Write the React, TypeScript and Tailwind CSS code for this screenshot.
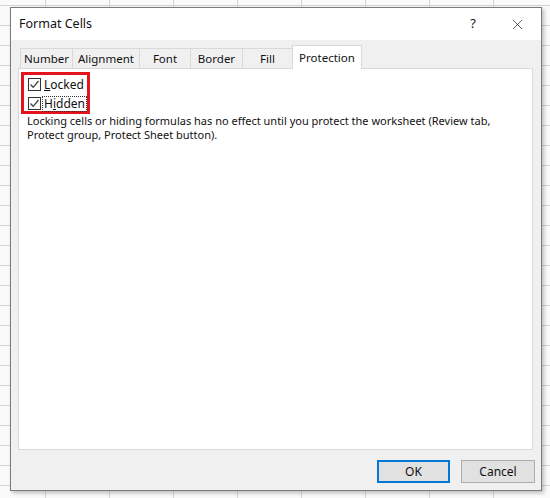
import { X } from "lucide-react";

const tabs = [
  { label: "Number", w: "w-[52px]" },
  { label: "Alignment", w: "w-[67px]" },
  { label: "Font", w: "w-[51px]" },
  { label: "Border", w: "w-[52px]" },
  { label: "Fill", w: "w-[50px]" },
];

function Check() {
  return (
    <span className="w-[13px] h-[13px] border border-[#333] bg-white flex items-center justify-center shrink-0">
      <svg width="11" height="11" viewBox="0 0 11 11">
        <path d="M1.5 5.5 L4.2 8.3 L9.5 2" fill="none" stroke="#444" strokeWidth="1.3" />
      </svg>
    </span>
  );
}

export default function App() {
  return (
    <div
      className="w-[550px] h-[498px] overflow-hidden pt-[7px] pl-[10px] bg-[#fafafa] text-[12px] text-[#111]"
      style={{
        fontFamily: '"Noto Sans", "Open Sans", sans-serif',
        backgroundImage:
          "linear-gradient(to bottom, #d4d4d4 1px, transparent 1px), linear-gradient(to right, #d4d4d4 1px, transparent 1px)",
        backgroundSize: "64px 20px",
        backgroundPosition: "-20px 5px, 45px 0",
      }}
    >
      <div className="w-[532px] h-[484px] border border-[#7a7a7a] bg-[#f0f0f0] flex flex-col shadow-[2px_2px_4px_rgba(0,0,0,0.25)]">
        {/* title bar */}
        <div className="h-[32px] bg-white flex items-center pl-[8px] shrink-0">
          <span className="flex-1 text-[12.5px]">Format Cells</span>
          <span className="w-[20px] text-center text-[13px] mr-[26px]">?</span>
          <X size={17} strokeWidth={1} className="mr-[15px] text-[#222]" />
        </div>
        {/* tabs */}
        <div className="flex items-end h-[28px] pl-[9px] shrink-0">
          {tabs.map((t) => (
            <div
              key={t.label}
              className={`${t.w} h-[20px] border-t border-l border-[#d9d9d9] flex items-center justify-center text-[11.5px]`}
            >
              {t.label}
            </div>
          ))}
          <div className="w-[70px] h-[24px] border border-b-0 border-[#d9d9d9] bg-white flex items-center justify-center text-[11.5px] relative top-[1px] z-10">
            Protection
          </div>
        </div>
        {/* panel */}
        <div className="ml-[7px] w-[515px] h-[382px] bg-white border border-[#d9d9d9] pl-[2px] pt-[3px] shrink-0">
          <div className="w-[69px] h-[42px] border-[3px] border-[#e3141c] flex flex-col pl-[4px] pt-[3px] gap-[6px]">
            <div className="flex items-center gap-[3px] h-[13px]">
              <Check />
              <span className="text-[12px]">
                <span className="underline">L</span>ocked
              </span>
            </div>
            <div className="flex items-center gap-[1px] h-[13px]">
              <Check />
              <span className="text-[12px] border border-dotted border-[#333] px-[1px] leading-[14px]">
                H<span className="underline">i</span>dden
              </span>
            </div>
          </div>
          <p className="pl-[6px] text-[11px] leading-[14px] w-[490px]">
            Locking cells or hiding formulas has no effect until you protect the worksheet (Review tab, Protect group, Protect Sheet button).
          </p>
        </div>
        {/* footer */}
        <div className="flex justify-end gap-[11px] pr-[6px] pt-[10px]">
          <button className="w-[73px] h-[23px] bg-[#e1e1e1] border-2 border-[#0078d7] text-[12px]">OK</button>
          <button className="w-[74px] h-[23px] bg-[#e1e1e1] border border-[#adadad] text-[12px]">Cancel</button>
        </div>
      </div>
    </div>
  );
}
